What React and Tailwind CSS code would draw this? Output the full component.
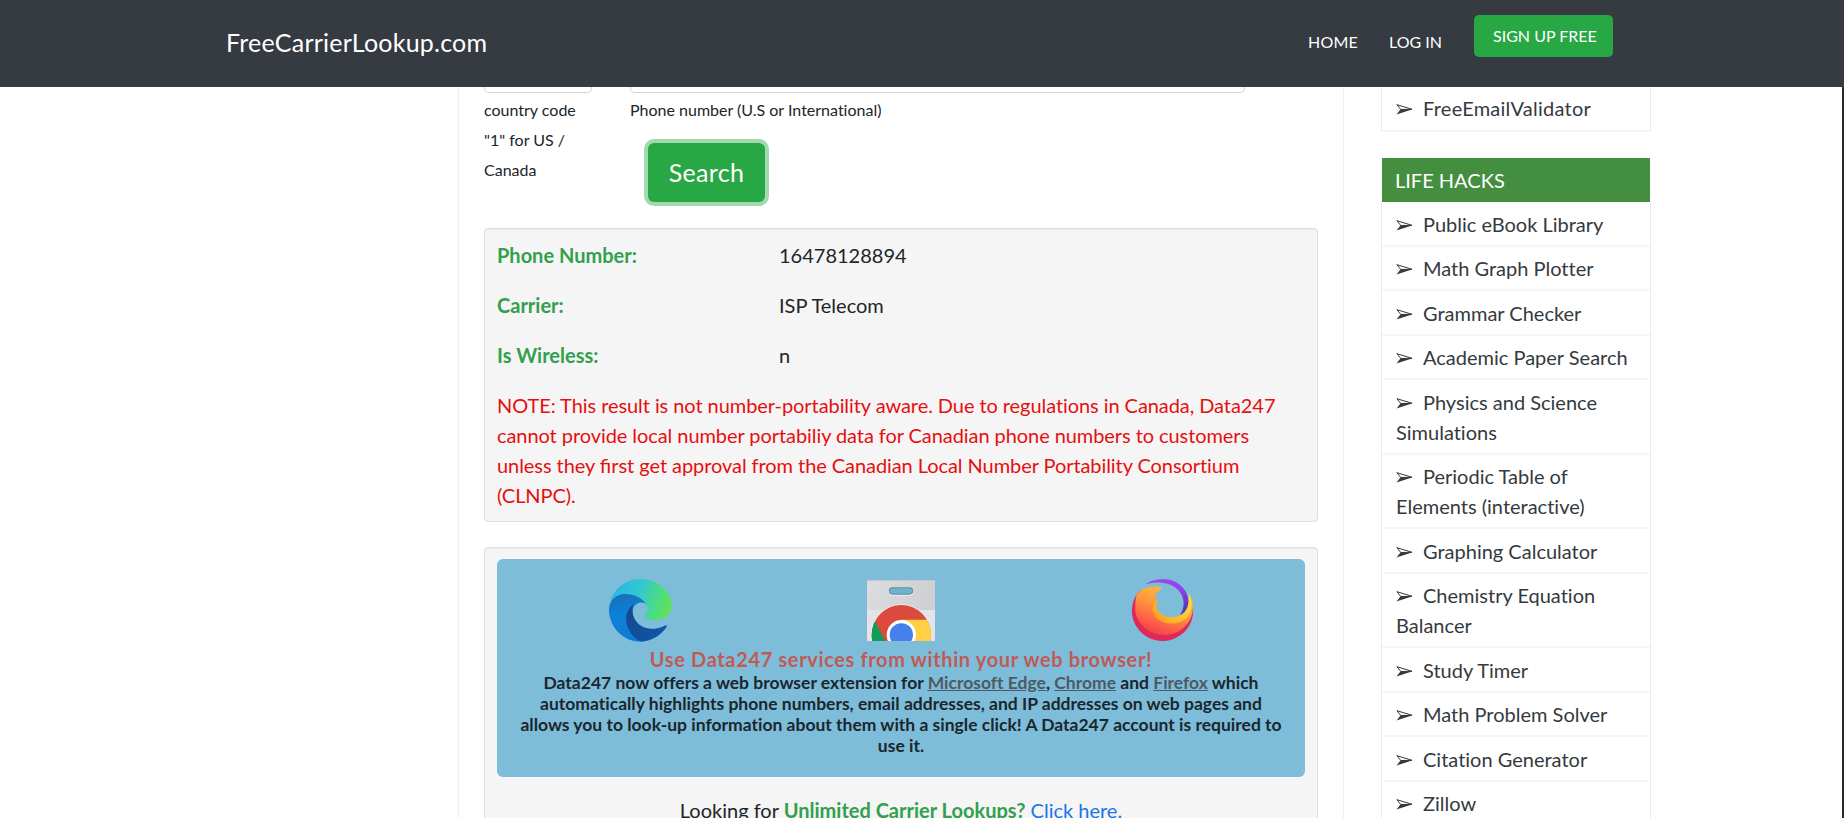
const links = [
  'Public eBook Library',
  'Math Graph Plotter',
  'Grammar Checker',
  'Academic Paper Search',
  'Physics and Science Simulations',
  'Periodic Table of Elements (interactive)',
  'Graphing Calculator',
  'Chemistry Equation Balancer',
  'Study Timer',
  'Math Problem Solver',
  'Citation Generator',
  'Zillow',
];

const results = [
  ['Phone Number:', '16478128894'],
  ['Carrier:', 'ISP Telecom'],
  ['Is Wireless:', 'n'],
];

function EdgeIcon() {
  return (
    <svg className="h-[63px] w-[63px]" viewBox="57 42 188 190" preserveAspectRatio="none">
      <defs>
        <linearGradient id="edgeTop" x1="60" y1="80" x2="240" y2="140" gradientUnits="userSpaceOnUse">
          <stop offset="0" stopColor="#2bb4e4" />
          <stop offset="0.45" stopColor="#33c8cf" />
          <stop offset="0.75" stopColor="#4bdc86" />
          <stop offset="1" stopColor="#62e252" />
        </linearGradient>
        <linearGradient id="edgeLeft" x1="90" y1="87" x2="120" y2="230" gradientUnits="userSpaceOnUse">
          <stop offset="0" stopColor="#176fb8" />
          <stop offset="0.4" stopColor="#0d80d8" />
          <stop offset="1" stopColor="#1279d4" />
        </linearGradient>
        <linearGradient id="edgeDark" x1="108" y1="150" x2="220" y2="210" gradientUnits="userSpaceOnUse">
          <stop offset="0" stopColor="#124a92" />
          <stop offset="1" stopColor="#0f57a8" />
        </linearGradient>
      </defs>
      <path fill="url(#edgeTop)" d="M57 132C60 82 100 42 151 42C205 42 244 80 244 122C244 150 221 166 196 166C176 166 164 160 164 154C164 150 172 145 172 132C172 118 160 108 145 114L120 125L80 110Z" />
      <path fill="url(#edgeLeft)" d="M57 134C59 106 78 87 105 87C134 87 158 100 168 119C156 108 134 112 128 134C122 165 150 195 185 193L160 231C104 236 57 190 57 134Z" />
      <path fill="url(#edgeDark)" d="M129 119C106 136 101 170 119 200C130 219 146 231 162 230C194 225 217 206 229 186C231 182 228 180 225 182C205 192 183 195 165 189C136 179 121 150 129 119Z" />
    </svg>
  );
}

function ChromeStoreIcon() {
  return (
    <svg className="h-[61px] w-[68px]" viewBox="0 0 204 181" preserveAspectRatio="none">
      <defs>
        <linearGradient id="bag" x1="0" y1="0" x2="204" y2="88" gradientUnits="userSpaceOnUse">
          <stop offset="0" stopColor="#dddddf" />
          <stop offset="1" stopColor="#cdced2" />
        </linearGradient>
        <clipPath id="disc">
          <circle cx="103" cy="163" r="89" />
        </clipPath>
      </defs>
      <rect width="204" height="181" fill="#e3e4e5" />
      <rect width="204" height="89" fill="url(#bag)" />
      <rect width="204" height="3" fill="#c3c8cc" />
      <rect x="65" y="22" width="74" height="24" rx="12" fill="#fff" />
      <rect x="67" y="23" width="70" height="19" rx="9" fill="#6fb2cd" stroke="#5e8ea3" strokeWidth="3" />
      <circle cx="103" cy="163" r="91" fill="#efefef" />
      <g clipPath="url(#disc)">
        <rect y="60" width="204" height="121" fill="#db4a3d" />
        <path fill="#0f9d58" d="M0 90L24 122L54 181H0Z" />
        <path fill="#ffcf44" d="M103 118H204V181H103Z" />
      </g>
      <circle cx="103" cy="163" r="44" fill="#fff" />
      <circle cx="103" cy="163" r="35" fill="#4680ec" />
    </svg>
  );
}

function FirefoxIcon() {
  return (
    <svg className="h-[63px] w-[63px]" viewBox="63 42 187 190" preserveAspectRatio="none">
      <defs>
        <linearGradient id="fire" x1="185" y1="60" x2="120" y2="232" gradientUnits="userSpaceOnUse">
          <stop offset="0" stopColor="#ffc42e" />
          <stop offset="0.4" stopColor="#ff9440" />
          <stop offset="0.7" stopColor="#fd5a48" />
          <stop offset="1" stopColor="#e8284f" />
        </linearGradient>
        <linearGradient id="flame" x1="240" y1="90" x2="140" y2="160" gradientUnits="userSpaceOnUse">
          <stop offset="0" stopColor="#f9e14a" />
          <stop offset="1" stopColor="#ffa21f" />
        </linearGradient>
        <linearGradient id="tail" x1="115" y1="45" x2="220" y2="150" gradientUnits="userSpaceOnUse">
          <stop offset="0" stopColor="#a04be0" />
          <stop offset="0.6" stopColor="#9340ef" />
          <stop offset="1" stopColor="#4b37a8" />
        </linearGradient>
      </defs>
      <path fill="#e0285a" d="M88 78A91 91 0 1 0 247 128L190 170L130 150Z" />
      <path fill="url(#fire)" d="M80 88C96 67 125 60 155 67C156 72 143 76 137 88C133 97 133 107 145 103C134 118 136 140 150 150C168 163 194 162 212 148C230 134 238 110 234 86C242 96 248 110 247 128A86 84 0 0 1 76 140C75 118 76 100 80 88Z" />
      <path fill="url(#flame)" d="M145 102C125 111 122 135 134 154C155 181 200 184 228 160C246 143 247 108 234 84C238 118 222 146 200 155C176 162 146 152 140 130C138 119 140 111 145 102Z" />
      <path fill="url(#tail)" d="M107 58C122 44 145 41 172 43C212 50 237 85 233 117C230 135 220 147 208 151C222 130 223 106 210 84C190 54 150 46 107 58Z" />
    </svg>
  );
}

function Arrow() {
  return (
    <svg className="mr-[10px] inline-block h-[11px] w-[17px] align-[1px]" viewBox="0 0 17 11">
      <path d="M0.9 0.7L16 5.3L4.8 5.5Z" fill="none" stroke="#343a40" strokeWidth="1" strokeLinejoin="round" />
      <path d="M4.6 5.3L16.6 5.3L0.5 10.6Z" fill="#343a40" />
    </svg>
  );
}

function SideItem({ children }) {
  return (
    <li className="border-b-2 border-[#f6f6f6] px-[14px] py-[6.25px] leading-[30px] text-[#343a40]">
      <Arrow />
      {children}
    </li>
  );
}

export default function App() {
  return (
    <div className="flex h-[818px] w-full flex-col overflow-hidden bg-white font-['Lato',sans-serif] text-[20px] leading-[30px] text-[#212529] [font-variant-ligatures:no-common-ligatures]">
      <header className="flex h-[87px] shrink-0 justify-between bg-[#363a41] text-white">
        <div className="pl-[226px] pt-[23px] text-[25px] leading-[38px] tracking-[0.22px]">FreeCarrierLookup.com</div>
        <nav className="flex items-start pr-[231px] text-[16px] leading-6">
          <a className="pt-[30px] tracking-[0.2px]">HOME</a>
          <a className="ml-[31px] pt-[30px]">LOG IN</a>
          <a className="ml-[32px] mt-[15px] h-[42px] w-[139px] rounded-[5px] bg-[#28a745] pl-[19px] pt-[9px]">SIGN UP FREE</a>
        </nav>
      </header>

      <div className="flex min-h-0 flex-1">
        <main className="ml-[458px] w-[886px] shrink-0 border-x border-[#eceef0] px-[25px]">
          <div className="flex text-[16px]">
            <div className="w-[108px]">
              <div className="h-[6px] rounded-b-[5px] border border-t-0 border-[#ced4da]" />
              <div className="pt-[2px]">country code "1" for US / Canada</div>
            </div>
            <div className="ml-[38px]">
              <div className="h-[6px] w-[615px] rounded-b-[5px] border border-t-0 border-[#ced4da]" />
              <div className="pt-[2px]">Phone number (U.S or International)</div>
              <button className="ml-[18px] mt-[18px] h-[59px] w-[117px] rounded-[6px] bg-[#28a745] pb-[2px] text-[25px] tracking-[0.3px] text-white ring-4 ring-[#a2d9af]">Search</button>
            </div>
          </div>

          <section className="mt-[26px] h-[294px] rounded-[4px] border border-[#e0e0e0] bg-[#f5f5f5] px-[12px] pt-[11px] shadow-[inset_0_1px_1px_rgba(0,0,0,0.05)]">
            {results.map(([label, value]) => (
              <div key={label} className="mb-5 flex">
                <b className="w-[282px] text-[#32a04e]">{label}</b>
                <span>{value}</span>
              </div>
            ))}
            <p className="tracking-[-0.07px] text-[#e60f0f]">
              NOTE: This result is not number-portability aware. Due to regulations in Canada, Data247 cannot provide local number portabiliy data for Canadian phone numbers to customers unless they <span className="tracking-normal [font-variant-ligatures:common-ligatures]">first</span> get approval from the Canadian Local Number Portability Consortium (CLNPC).
            </p>
          </section>

          <section className="mt-[25px] h-[400px] rounded-[4px] border border-[#e0e0e0] bg-[#f5f5f5] px-[12px] pt-[11px] text-center shadow-[inset_0_1px_1px_rgba(0,0,0,0.05)]">
            <div className="h-[218px] rounded-[6px] bg-[#7dbdda] px-5 pt-[19.5px]">
              <div className="flex items-center">
                <div className="flex w-[246px] justify-center"><EdgeIcon /></div>
                <div className="flex w-[276px] justify-center"><ChromeStoreIcon /></div>
                <div className="flex w-[246px] justify-center"><FirefoxIcon /></div>
              </div>
              <div className="mt-[5px] pb-px font-bold leading-6 tracking-[0.64px] text-[#c15a55]">Use Data247 services from within your web browser!</div>
              <p className="text-[17.5px] font-bold leading-[21px] text-[#1b262d]">
                Data247 now offers a web browser extension for <a className="text-[#4d5a63] underline">Microsoft Edge</a>, <a className="text-[#4d5a63] underline">Chrome</a> and <a className="text-[#4d5a63] underline">Firefox</a> which automatically highlights phone numbers, email addresses, and IP addresses on web pages and allows you to look-up information about them with a single click! A Data247 account is required to use it.
              </p>
            </div>
            <p className="mt-[18px]">
              Looking for <b className="text-[#32a04e]">Unlimited Carrier Lookups?</b> <a className="text-[#1a75e8]">Click here.</a>
            </p>
          </section>
        </main>

        <aside className="ml-[37px] w-[270px] shrink-0">
          <ul className="h-[45px] border-x border-b border-[#ebebeb] tracking-[0.25px]">
            <SideItem>FreeEmailValidator</SideItem>
          </ul>
          <h2 className="mx-px mt-[26px] h-[44px] bg-[#438f3f] pl-[13px] pt-[7px] leading-[30px] text-white">LIFE HACKS</h2>
          <ul className="border-x border-[#ebebeb] pt-[0.4px]">
            {links.map((link) => (
              <SideItem key={link}>{link}</SideItem>
            ))}
          </ul>
        </aside>
        <div className="ml-auto w-[2px] bg-[#2b2b2b]" />
      </div>
    </div>
  );
}
